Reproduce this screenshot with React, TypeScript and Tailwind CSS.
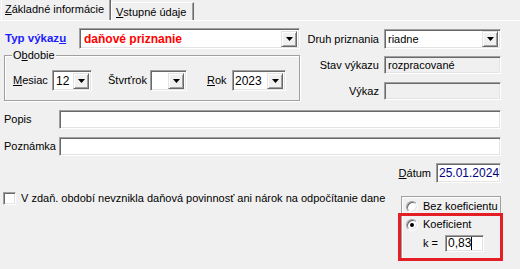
import React from 'react';

const sunken =
  'border border-t-[#a0a0a0] border-l-[#a0a0a0] border-b-white border-r-white shadow-[inset_1px_1px_0_#696969,inset_-1px_-1px_0_#e3e3e3]';
const raised =
  'border border-t-[#e3e3e3] border-l-[#e3e3e3] border-b-[#696969] border-r-[#696969] shadow-[inset_1px_1px_0_#ffffff,inset_-1px_-1px_0_#a0a0a0] bg-[#f0f0f0]';

const DropButton: React.FC = () => (
  <div className={`${raised} w-[16px] h-[16px] flex items-center justify-center shrink-0`}>
    <svg width="7" height="4" viewBox="0 0 7 4">
      <path d="M0 0h7L3.5 4z" fill="#000" />
    </svg>
  </div>
);

interface ComboProps {
  value?: React.ReactNode;
  className?: string;
}

const Combo: React.FC<ComboProps> = ({ value, className = '' }) => (
  <div className={`${sunken} bg-white flex items-center pl-[2px] pr-[2px] ${className}`}>
    <div className="flex-1 truncate leading-none">{value}</div>
    <DropButton />
  </div>
);

const Radio: React.FC<{ checked?: boolean }> = ({ checked }) => (
  <div className="w-[12px] h-[12px] rounded-full bg-white border border-t-[#a0a0a0] border-l-[#a0a0a0] border-b-white border-r-white shadow-[inset_1px_1px_0_#696969,inset_-1px_-1px_0_#e3e3e3] flex items-center justify-center shrink-0">
    {checked && <div className="w-[4px] h-[4px] rounded-full bg-black" />}
  </div>
);

export default function App() {
  return (
    <div className="w-[520px] h-[269px] bg-[#f0f0f0] overflow-hidden text-[11px] text-black font-['Liberation_Sans',Arial,sans-serif] leading-[13px]">
      {/* Tabs */}
      <div className="h-[21px] flex items-end pl-[1px] border-b border-white">
        <div className="h-[21px] w-[110px] border-l border-t border-white border-r border-r-[#696969] shadow-[inset_-1px_0_0_#a0a0a0] flex items-center pl-[3px] pb-[1px]">
          <span>
            <u>Z</u>ákladné informácie
          </span>
        </div>
        <div className="h-[18px] w-[83px] border-l border-t border-white border-r border-r-[#696969] shadow-[inset_-1px_0_0_#a0a0a0] flex items-center pl-[4px] pt-[1px]">
          <span>
            <u>V</u>stupné údaje
          </span>
        </div>
      </div>

      {/* Top section */}
      <div className="flex">
        <div className="w-[300px] pl-[4px]">
          <div className="mt-[7px] h-[21px] flex items-center">
            <div className="w-[75px] pl-[1px] font-bold text-[#1c1cff] text-[11.5px]">
              Typ výkaz<u>u</u>
            </div>
            <Combo
              className="w-[221px] h-[21px]"
              value={<span className="font-bold text-[#ff0000] text-[12px] pl-[2px]">daňové priznanie</span>}
            />
          </div>

          <div className="relative mt-[6px] w-[296px] border border-[#a0a0a0] shadow-[inset_1px_1px_0_#ffffff,1px_1px_0_#ffffff] pt-[14px] pb-[9px] pl-[8px]">
            <div className="absolute -top-[7px] left-[7px] px-[1px] bg-[#f0f0f0]">
              O<u>b</u>dobie
            </div>
            <div className="flex items-center h-[21px]">
              <div className="w-[39px]">
                <u>M</u>esiac
              </div>
              <Combo className="w-[40px] h-[21px]" value={<span className="pl-[1px] text-[12px]">12</span>} />
              <div className="w-[42px] ml-[16px]">Štvrťrok</div>
              <Combo className="w-[37px] h-[21px]" />
              <div className="w-[25px] ml-[20px]">
                <u>R</u>ok
              </div>
              <Combo className="w-[54px] h-[21px]" value={<span className="text-[12px]">2023</span>} />
            </div>
          </div>
        </div>

        <div className="flex-1 pr-[19px]">
          <div className="mt-[8px] h-[20px] flex items-center">
            <div className="w-[84px] text-right pr-[5px]">Druh priznania</div>
            <Combo className="flex-1 h-[20px]" value={<span className="pl-[1px]">riadne</span>} />
          </div>
          <div className="mt-[7px] h-[18px] flex items-center">
            <div className="w-[84px] text-right pr-[5px]">Stav výkazu</div>
            <div className={`${sunken} flex-1 h-[18px] flex items-center pl-[3px]`}>rozpracované</div>
          </div>
          <div className="mt-[8px] h-[18px] flex items-center">
            <div className="w-[84px] text-right pr-[5px]">Výkaz</div>
            <div className={`${sunken} flex-1 h-[18px]`} />
          </div>
        </div>
      </div>

      {/* Popis / Poznámka / Dátum */}
      <div className="pr-[19px] pl-[4px]">
        <div className="mt-[9px] h-[19px] flex items-center">
          <div className="w-[55px]">Popis</div>
          <div className={`${sunken} bg-white flex-1 h-[19px]`} />
        </div>
        <div className="mt-[8px] h-[19px] flex items-center">
          <div className="w-[55px]">Poznámka</div>
          <div className={`${sunken} bg-white flex-1 h-[19px]`} />
        </div>
        <div className="mt-[7px] h-[20px] flex items-center justify-end">
          <div className="mr-[5px]">
            <u>D</u>átum
          </div>
          <div className={`${sunken} bg-white w-[65px] h-[20px] flex items-center pl-[2px] text-[#000080] text-[12px]`}>
            25.01.2024
          </div>
        </div>
      </div>

      {/* Bottom */}
      <div className="mt-[9px] flex items-start justify-between pl-[3px] pr-[19px]">
        <div className="flex items-center gap-[5px] h-[13px]">
          <div className={`${sunken} bg-white w-[13px] h-[13px]`} />
          <span>V zdaň. období nevznikla daňová povinnosť ani nárok na odpočítanie dane</span>
        </div>

        <div className="relative mt-[4px] w-[100px] h-[63px] border border-[#a0a0a0] shadow-[inset_1px_1px_0_#ffffff]">
          <div className="flex items-center gap-[5px] pl-[4px] h-[17px] mt-[1px]">
            <Radio />
            <span>Bez koeficientu</span>
          </div>
          <div className="flex items-center gap-[5px] pl-[4px] h-[17px] mt-[1px]">
            <Radio checked />
            <span>Koeficient</span>
          </div>
          <div className="flex items-center pl-[21px] mt-[2px]">
            <span className="w-[22px]">k =</span>
            <div className={`${sunken} bg-white w-[39px] h-[17px] flex items-center pl-[2px] text-[12px]`}>
              0,83
              <span className="w-px h-[13px] bg-black" />
            </div>
          </div>
          <div className="absolute left-[-4px] top-[16px] w-[105px] h-[48px] border-[3px] border-[#e31e24]" />
        </div>
      </div>
    </div>
  );
}
